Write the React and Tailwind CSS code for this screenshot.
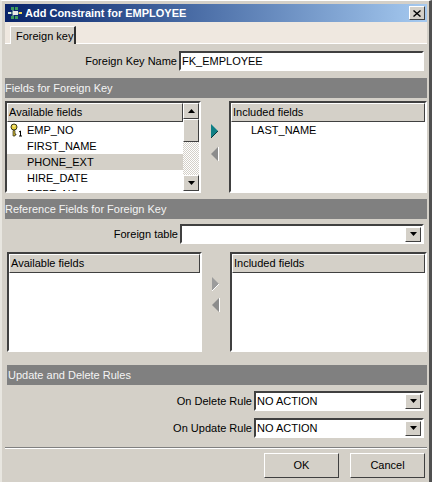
import React from "react";

const sunken = "border-2 border-t-[#404040] border-l-[#404040] border-b-white border-r-white";
const raised = "border border-t-white border-l-white border-b-[#404040] border-r-[#404040]";

function AppIcon() {
  return (
    <svg width="16" height="14" viewBox="0 0 16 14" className="shrink-0">
      <path d="M2 7h12M6 3v8" stroke="#9fc5b0" strokeWidth="1" />
      <rect x="4" y="1" width="3" height="3" fill="#3f9a5c" />
      <rect x="8" y="1" width="3" height="3" fill="#3f9a5c" />
      <rect x="1" y="6" width="3" height="2" fill="#d8ead8" />
      <rect x="6" y="5" width="5" height="4" fill="#e8e8e8" />
      <rect x="12" y="6" width="3" height="2" fill="#f0d850" />
      <rect x="4" y="10" width="3" height="3" fill="#3f9a5c" />
      <rect x="8" y="10" width="3" height="3" fill="#3f9a5c" />
    </svg>
  );
}

function KeyIcon() {
  return (
    <svg width="18" height="14" viewBox="0 0 18 14" className="shrink-0">
      <circle cx="5" cy="4" r="3" fill="#e8d040" stroke="#3a3a18" />
      <rect x="4" y="2.5" width="2" height="1" fill="#fff8c0" />
      <path d="M4 7.5v5.5h2v-1h1v-1H6V7.5z" fill="#c8b030" stroke="#303020" strokeWidth="0.7" />
      <path d="M10 9l1.5-1v5M10 13h3" fill="none" stroke="#000" strokeWidth="1" />
    </svg>
  );
}

function Triangle({ dir, color = "#000000", size = 4 }) {
  const points = dir === "up" ? "0,4 7,4 3.5,0" : "0,0 7,0 3.5,4";
  return (
    <svg width="7" height={size} viewBox="0 0 7 4">
      <polygon points={points} fill={color} />
    </svg>
  );
}

function ArrowButtons({ active, className, gap }) {
  return (
    <div className={`flex flex-col items-center ${className}`}>
      <svg width="8" height="14" viewBox="0 0 8 14" className={gap}>
        <polygon points="0,0 7,7 0,14" fill={active ? "#0f7f85" : "#9c9c9c"} />
        <path d="M7 7L0 14" stroke={active ? "#08383a" : "#ffffff"} />
      </svg>
      <svg width="8" height="14" viewBox="0 0 8 14">
        <polygon points="7,0 0,7 7,14" fill="#8c8c8c" />
        <path d="M7.5 0v14" stroke="#ffffff" />
      </svg>
    </div>
  );
}

function SectionHeader({ children, className = "" }) {
  return (
    <div className={`h-5 bg-[#808080] text-[#f4f4f4] leading-5 ${className}`}>{children}</div>
  );
}

function ListHeader({ children }) {
  return (
    <div className="h-[19px] bg-[#d4d0c8] border border-t-white border-l-white border-b-[#404040] border-r-[#404040] leading-[17px] pl-[1px] truncate">
      {children}
    </div>
  );
}

function Combo({ value, className = "" }) {
  return (
    <div className={`${sunken} bg-white h-5 flex items-center justify-between pl-[1px] pr-[1px] ${className}`}>
      <span>{value}</span>
      <div className={`${raised} bg-[#d4d0c8] w-4 h-[15px] flex items-center justify-center`}>
        <Triangle dir="down" />
      </div>
    </div>
  );
}

function FormRow({ label, children, className = "" }) {
  return (
    <div className={`flex items-center justify-end ${className}`}>
      <span className="mr-[2px]">{label}</span>
      {children}
    </div>
  );
}

function ScrollBar() {
  return (
    <div className="w-4 flex flex-col bg-[repeating-conic-gradient(#ffffff_0_25%,#d4d0c8_0_50%)] bg-[length:2px_2px]">
      <div className={`${raised} bg-[#d4d0c8] h-4 flex items-center justify-center shrink-0`}>
        <Triangle dir="up" />
      </div>
      <div className={`${raised} bg-[#d4d0c8] h-[23px] shrink-0`} />
      <div className="flex-1" />
      <div className={`${raised} bg-[#d4d0c8] h-4 flex items-center justify-center shrink-0`}>
        <Triangle dir="down" />
      </div>
    </div>
  );
}

const rows = ["EMP_NO", "FIRST_NAME", "PHONE_EXT", "HIRE_DATE", "DEPT_NO"];

export default function App() {
  return (
    <div className="w-[432px] h-[482px] bg-[#d4d0c8] overflow-hidden text-[11px] text-black font-['Liberation_Sans',Arial,sans-serif] border-l-2 border-r-[3px] border-t-[1px] border-l-[#e8e6e0] border-r-[#505050] border-t-white">
      <div className="pt-[3px] pl-[3px] pr-[2px]">
        {/* title bar */}
        <div className="h-[18px] flex items-center justify-between pl-[2px] pr-[2px] bg-gradient-to-r from-[#0a246a] to-[#a6caf0] text-white font-bold text-[11px]">
          <div className="flex items-center gap-[2px]">
            <AppIcon />
            <span>Add Constraint for EMPLOYEE</span>
          </div>
          <div className={`${raised} bg-[#d4d0c8] w-4 h-[14px] flex items-center justify-center`}>
            <svg width="8" height="7" viewBox="0 0 8 7">
              <path d="M0.5 0.5l7 6M7.5 0.5l-7 6" stroke="#000" strokeWidth="1.4" />
            </svg>
          </div>
        </div>

        {/* tabs */}
        <div className="h-[22px] bg-[#efe8e0] border-b border-white pl-[5px] flex items-end">
          <div className="h-[18px] w-[66px] bg-[#d4d0c8] border-t border-l border-white border-r-2 border-r-[#303030] pl-[5px] leading-[19px] -mb-[1px] whitespace-nowrap">
            Foreign key
          </div>
        </div>

        <FormRow label="Foreign Key Name" className="mt-[7px] pr-[3px]">
          <div className={`${sunken} bg-white h-5 w-[245px] pl-[1px] leading-4`}>FK_EMPLOYEE</div>
        </FormRow>

        <SectionHeader className="mt-[7px]">Fields for Foreign Key</SectionHeader>

        {/* first pair of lists */}
        <div className="flex mt-[3px] h-[92px]">
          <div className={`${sunken} w-[196px] bg-white flex overflow-hidden`}>
            <div className="flex-1 min-w-0">
              <ListHeader>Available fields</ListHeader>
              {rows.map((name, i) => (
                <div key={name} className={`h-4 flex items-center pl-[2px] leading-4 whitespace-nowrap ${i === 2 ? "bg-[#d4d0c8]" : ""}`}>
                  <div className="w-[18px] shrink-0">{i === 0 && <KeyIcon />}</div>
                  <span>{name}</span>
                </div>
              ))}
            </div>
            <ScrollBar />
          </div>
          <ArrowButtons active className="w-[28px] pt-[23px]" gap="mb-[9px]" />
          <div className={`${sunken} w-[198px] bg-white`}>
            <ListHeader>Included fields</ListHeader>
            <div className="pl-[20px] h-4 leading-4">LAST_NAME</div>
          </div>
        </div>

        <SectionHeader className="mt-[6px]">Reference Fields for Foreign Key</SectionHeader>

        <FormRow label="Foreign table" className="mt-[5px] pr-[3px]">
          <Combo value="" className="w-[244px]" />
        </FormRow>

        {/* second pair of lists */}
        <div className="flex mt-[8px] h-[100px] pl-[2px]">
          <div className={`${sunken} w-[195px] bg-white`}>
            <ListHeader>Available fields</ListHeader>
          </div>
          <ArrowButtons className="w-[28px] pt-[25px]" gap="mb-[7px]" />
          <div className={`${sunken} w-[197px] bg-white`}>
            <ListHeader>Included fields</ListHeader>
          </div>
        </div>

        <SectionHeader className="mt-[13px] ml-[2px] pl-[1px]">Update and Delete Rules</SectionHeader>

        <FormRow label="On Delete Rule" className="mt-[6px] pr-[3px]">
          <Combo value="NO ACTION" className="w-[170px]" />
        </FormRow>
        <FormRow label="On Update Rule" className="mt-[7px] pr-[3px]">
          <Combo value="NO ACTION" className="w-[170px]" />
        </FormRow>

        <div className="mt-[9px] border-t border-t-[#808080] border-b border-b-white" />

        {/* footer buttons */}
        <div className="flex justify-end gap-[11px] mt-[4px] pr-[2px]">
          <button className={`${raised} w-[75px] h-[25px] bg-[#d4d0c8]`}>OK</button>
          <button className={`${raised} w-[75px] h-[25px] bg-[#d4d0c8]`}>Cancel</button>
        </div>
      </div>
    </div>
  );
}
